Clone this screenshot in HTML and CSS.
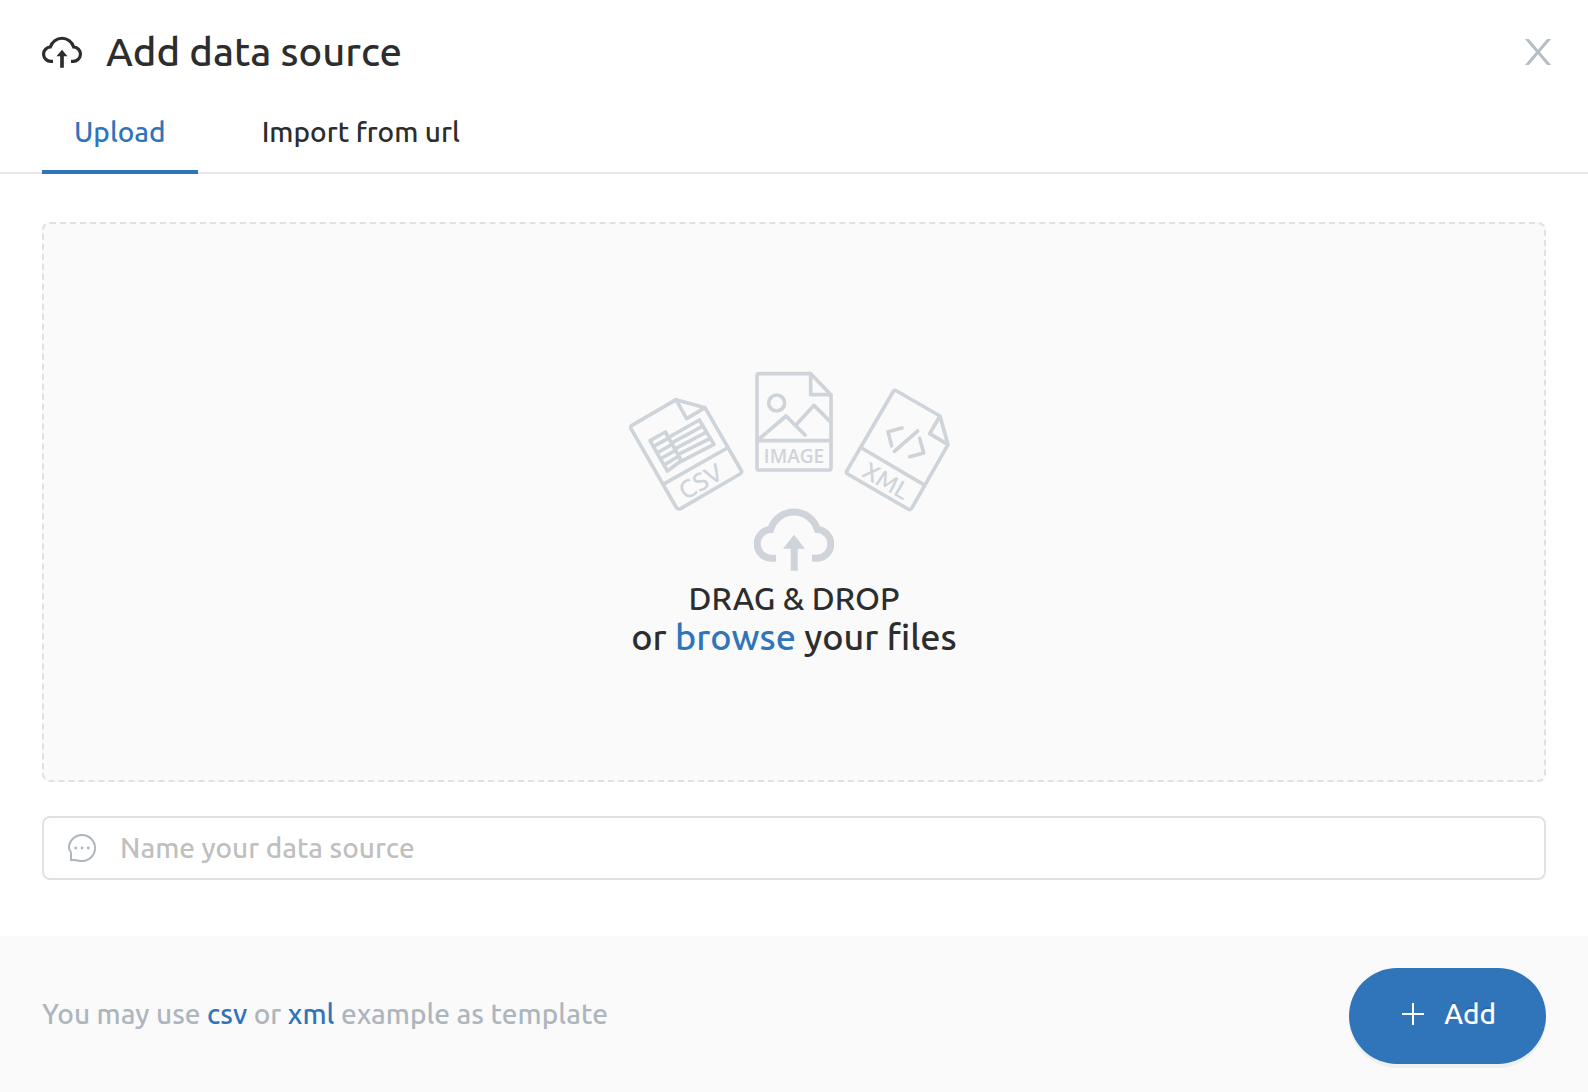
FILE: index.html
```html
<!DOCTYPE html>
<html lang="en">
<head>
<meta charset="utf-8">
<meta name="viewport" content="width=device-width, initial-scale=1">
<title>Add data source</title>
<link rel="stylesheet" href="styles.css">
</head>
<body>
<form class="dialog">
  <header class="header">
    <svg class="header-icon" viewBox="0 0 240 188" aria-hidden="true">
      <path class="cloud-line cloud-line-thin" d="M66 150H55A43 43 0 0 1 50 64A73 73 0 0 1 190 64A43 43 0 0 1 185 150H174"/>
      <path class="cloud-arrow" d="M120 80L153 120H131V188H109V120H87Z"/>
    </svg>
    <h1 class="title">Add data source</h1>
    <button class="close" type="button" aria-label="Close">
      <svg class="close-icon" viewBox="0 0 26 26" aria-hidden="true"><path d="M1-1L25 27M25-1L1 27"/></svg>
    </button>
  </header>

  <nav class="tabs">
    <button class="tab tab-active" type="button">Upload</button>
    <button class="tab" type="button">Import from url</button>
  </nav>

  <main class="content">
    <section class="dropzone">
      <svg class="files" viewBox="624 370 340 138" aria-hidden="true">
        <g class="line" transform="translate(610 360) scale(.33333)">
          <path d="M198 119L66 196Q60 200 63 206L198 441Q204 450 212 446L390 342Q397 337 393 330L285 143L198 119L230 176L285 143"/>
          <path d="M163 371L352 264"/>
          <path d="M120 242L166 216L214 302L172 333ZM130 260L178 233M141 279L188 252M151 297L198 270M162 315L207 288"/>
          <path d="M178 231L268 180L312 253L213 304M187 248L279 198M196 266L290 216M204 284L301 235"/>
        </g>
        <g class="line" transform="translate(610 360) scale(.33333)">
          <path d="M602 41H448Q441 41 441 48V323Q441 330 448 330H656Q663 330 663 323V104L602 41V104H663M441 242H663"/>
          <circle cx="500" cy="129" r="24"/>
          <path d="M444 240L528 168L585 225M558 195L612 136L660 184"/>
        </g>
        <g class="line" transform="translate(780 360) scale(.33333)">
          <path d="M480 168L350 93Q343 89 339 96L201 332Q197 338 203 342L384 447Q391 451 395 445L504 254L480 168L449 221L504 254M245 264L430 373"/>
          <path d="M366 204L324 215L335 258M413 213L343 274M419 235L431 279L389 290"/>
        </g>
        <text class="file-label file-label-csv" transform="translate(705 489) rotate(-30)">CSV</text>
        <text class="file-label file-label-image" x="794" y="463">IMAGE</text>
        <text class="file-label file-label-xml" transform="translate(882 488) rotate(30)">XML</text>
      </svg>
      <svg class="cloud" viewBox="0 0 240 188" aria-hidden="true">
        <path class="cloud-line" d="M66 150H55A43 43 0 0 1 50 64A73 73 0 0 1 190 64A43 43 0 0 1 185 150H174"/>
        <path class="cloud-arrow" d="M120 80L153 122H131V188H110V122H87Z"/>
      </svg>
      <p class="drop-title">DRAG &amp; DROP</p>
      <p class="drop-text">or <a class="link" href="#">browse</a> your files</p>
    </section>

    <label class="field">
      <svg class="field-icon" viewBox="0 0 28 28" aria-hidden="true">
        <path class="bubble" d="M3 19V26H6C9 26 10 27 14 27A13 13 0 1 0 1 14C1 16 3 17 3 19Z"/>
        <g class="bubble-dots"><circle cx="7.700" cy="14" r="1.400"/><circle cx="14" cy="14" r="1.400"/><circle cx="20.300" cy="14" r="1.400"/></g>
      </svg>
      <input class="field-input" type="text" aria-label="Name your data source" placeholder="Name your data source">
    </label>
  </main>

  <footer class="footer">
    <p class="hint">You may use <a class="link" href="#">csv</a> or <a class="link" href="#">xml</a> example as template</p>
    <button class="add" type="submit">
      <svg class="add-icon" viewBox="0 0 22 22" aria-hidden="true"><path d="M11 0V22M0 11H22"/></svg>
      <span>Add</span>
    </button>
  </footer>
</form>
</body>
</html>
```
FILE: styles.css
```css
* { box-sizing: border-box; }

body {
  margin: 0;
  background: #fff;
  color: #2d2d2d;
  font: 500 28px/36px Ubuntu, "Noto Sans", sans-serif;
}

h1, p { margin: 0; }
svg { display: block; flex: none; fill: none; }
button { font: inherit; border: 0; padding: 0; background: none; cursor: pointer; }

.link { color: #3074b9; text-decoration: none; }

.dialog { display: flex; flex-direction: column; min-height: 100vh; }

.header {
  display: flex;
  align-items: center;
  gap: 24px;
  padding: 24px 36px 20px 42px;
}
.header-icon { width: 40px; height: 32px; color: #2d2d2d; }
.title { flex: 1; font-size: 40px; line-height: 56px; font-weight: 500; }
.close { padding: 0; color: #b5bec5; }
.close-icon { width: 28px; height: 26px; stroke: currentColor; stroke-width: 3; }

.cloud-line { stroke: currentColor; stroke-width: 21; }
.cloud-line-thin { stroke-width: 19; }
.cloud-arrow { fill: currentColor; }

.tabs {
  display: flex;
  gap: 32px;
  padding: 0 42px;
  box-shadow: inset 0 -2px #e8e8e8;
}
.tab {
  padding: 14px 32px 20px;
  border-bottom: 4px solid transparent;
  color: #2d2d2d;
}
.tab-active { border-color: #3074b9; color: #3074b9; }

.content {
  flex: 1;
  display: flex;
  flex-direction: column;
  gap: 34px;
  padding: 48px 42px 56px;
}

.dropzone {
  flex: 1;
  display: flex;
  flex-direction: column;
  align-items: center;
  justify-content: center;
  padding-top: 22px;
  border: 2px dashed #dee2e6;
  border-radius: 8px;
  background: #fafafa;
  text-align: center;
}
.files { width: 340px; height: 138px; overflow: visible; }
.cloud { width: 80px; height: 63px; color: #ced4d9; }
.line {
  stroke: #ced4d9;
  stroke-width: 11;
  stroke-linecap: round;
  stroke-linejoin: round;
}
.file-label { fill: #ced4d9; text-anchor: middle; }
.file-label-csv { font-size: 25px; }
.file-label-image { font-family: "Open Sans", sans-serif; font-size: 19px; font-weight: 600; }
.file-label-xml { font-size: 24px; }

.drop-title { margin-top: 8px; font-size: 32px; line-height: 38px; }
.drop-text { font-size: 36px; line-height: 40px; }

.field {
  display: flex;
  align-items: center;
  gap: 24px;
  height: 64px;
  padding: 0 24px;
  border: 2px solid #dee2e6;
  border-radius: 8px;
}
.field-icon { width: 28px; height: 28px; }
.bubble { stroke: #adb5bd; stroke-width: 2; }
.bubble-dots { fill: #adb5bd; }
.field-input {
  flex: 1;
  min-width: 0;
  padding: 0;
  border: 0;
  outline: 0;
  background: none;
  color: inherit;
  font: inherit;
}
.field-input::placeholder { color: #bfbfbf; opacity: 1; }

.footer {
  display: flex;
  align-items: center;
  justify-content: space-between;
  gap: 24px;
  padding: 32px 42px 28px;
  background: #fafafa;
}
.hint { padding-bottom: 4px; color: #adb5bd; }
.add {
  display: flex;
  align-items: center;
  justify-content: center;
  gap: 20px;
  height: 96px;
  padding: 0 50px 4px 53px;
  border-radius: 48px;
  background: #3074b9;
  box-shadow: 0 4px rgba(0, 0, 0, .045);
  color: #fff;
  text-shadow: 0 -2px rgba(0, 0, 0, .12);
}
.add-icon { width: 22px; height: 22px; stroke: currentColor; stroke-width: 2; }
```
